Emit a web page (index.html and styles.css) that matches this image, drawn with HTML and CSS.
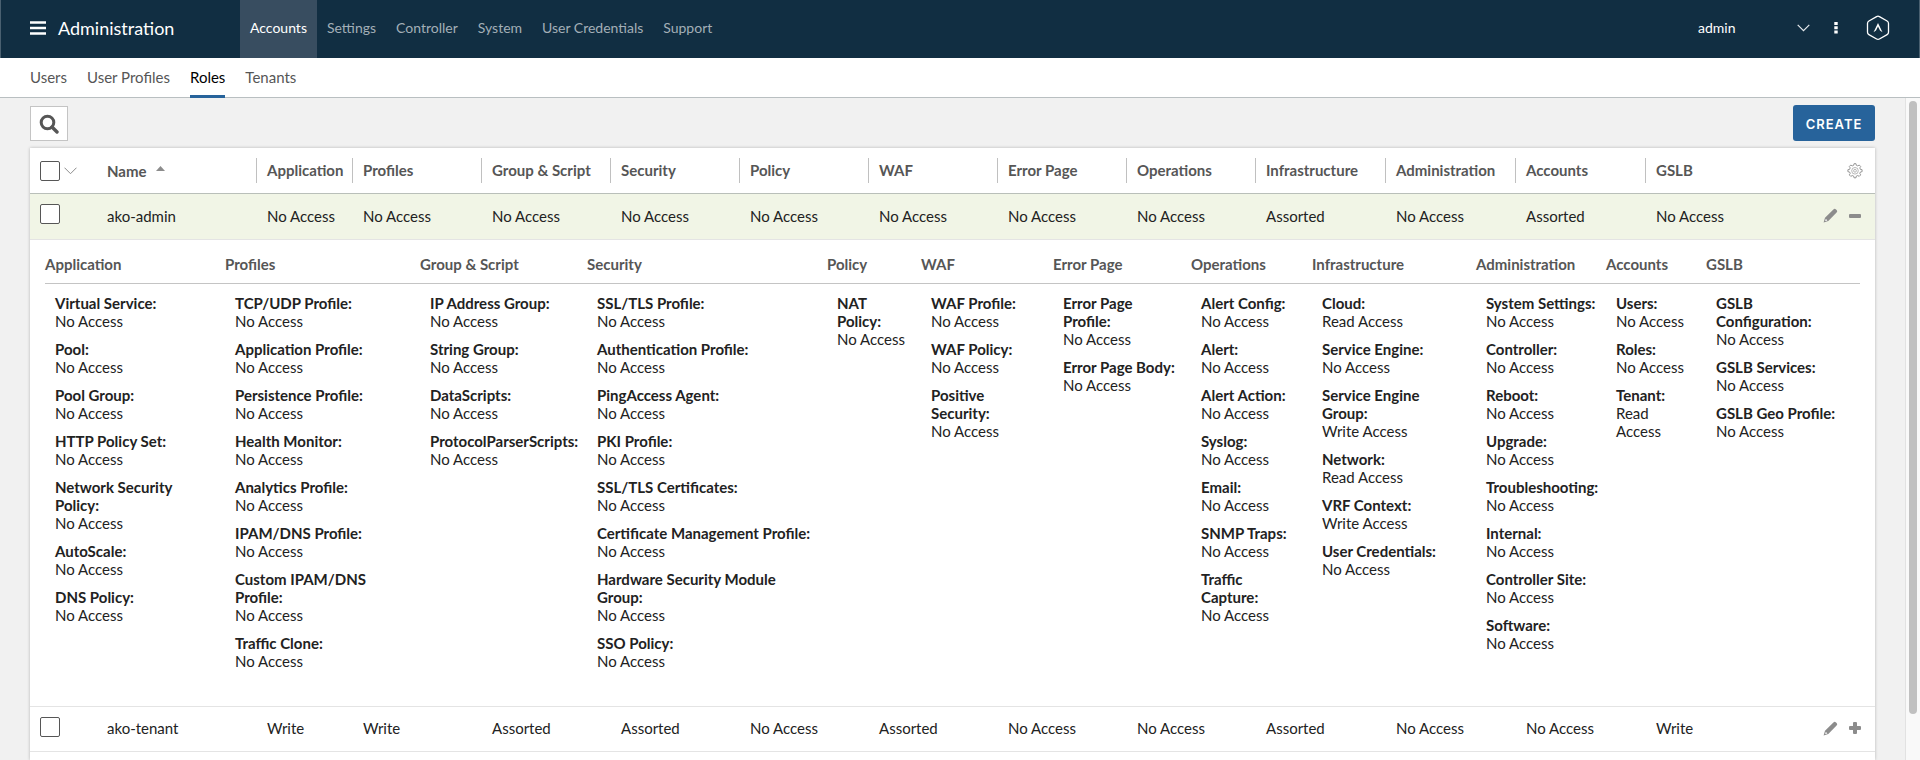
FILE: index.html
```html
<!DOCTYPE html>
<html lang="en">
<head>
<meta charset="utf-8">
<title>Administration - Roles</title>
<link rel="stylesheet" href="styles.css">
</head>
<body>
<header class="topbar">
  <button class="icon-btn menu-btn" aria-label="Menu">
    <svg width="16" height="14" viewBox="0 0 16 14"><path d="M0 1.500h16M0 7h16M0 12.500h16" stroke="#fff" stroke-width="2.600"/></svg>
  </button>
  <h1 class="title">Administration</h1>
  <nav class="main-nav">
    <a href="#" class="active">Accounts</a>
    <a href="#">Settings</a>
    <a href="#">Controller</a>
    <a href="#">System</a>
    <a href="#">User Credentials</a>
    <a href="#">Support</a>
  </nav>
  <div class="user-area">
    <label class="user-select">
      <select aria-label="Tenant"><option>admin</option></select>
      <svg width="13" height="8" viewBox="0 0 13 8"><path d="M.7.9l5.800 5.700L12.300.9" fill="none" stroke="#e6eaed" stroke-width="1.200"/></svg>
    </label>
    <button class="icon-btn" aria-label="More">
      <svg width="4" height="12" viewBox="0 0 4 12"><path d="M.3 0h3.400v3H.3zM.3 4.300h3.400v3H.3zM.3 8.600h3.400v3H.3z" fill="#fff"/></svg>
    </button>
    <button class="icon-btn logo-btn" aria-label="About">
      <svg width="24" height="26" viewBox="0 0 24 26"><path d="M10.600 1.600q1.400-.8 2.800 0l7.700 4.400q1.400.8 1.400 2.400v8.800q0 1.600-1.400 2.400l-7.700 4.400q-1.400.8-2.800 0l-7.700-4.400q-1.400-.8-1.400-2.400V8.400q0-1.600 1.400-2.400z" fill="none" stroke="#fff" stroke-width="1.300"/><path d="M7.500 17.300L12 8l4.500 9.300-2.500-1.800-2-4-2 4z" fill="#fff"/></svg>
    </button>
  </div>
</header>

<nav class="sub-nav">
  <a href="#">Users</a>
  <a href="#">User Profiles</a>
  <a href="#" class="active">Roles</a>
  <a href="#">Tenants</a>
</nav>

<main class="page">
  <section class="content">
    <div class="toolbar">
      <button class="search-btn" aria-label="Search">
        <svg width="20" height="20" viewBox="0 0 20 20"><circle cx="8.500" cy="8.500" r="6.300" fill="none" stroke="#565656" stroke-width="3"/><path d="M13 13l5 5" stroke="#565656" stroke-width="3.400" stroke-linecap="round"/></svg>
      </button>
      <button class="create-btn">CREATE</button>
    </div>

    <div class="card">
      <table class="grid">
        <colgroup>
          <col class="c-check"><col class="c-name"><col class="c-app">
          <col class="c-mid"><col class="c-mid"><col class="c-mid"><col class="c-mid"><col class="c-mid"><col class="c-mid"><col class="c-mid">
          <col class="c-wide"><col class="c-wide"><col class="c-wide"><col class="c-gslb"><col class="c-actions">
        </colgroup>
        <thead>
          <tr>
            <td class="check"><div class="check-all"><input type="checkbox" aria-label="Select all"><svg width="13" height="8" viewBox="0 0 13 8"><path d="M.5.7l6 6 6-6" fill="none" stroke="#8c8c8c"/></svg></div></td>
            <th class="name">Name <svg class="sort" width="9" height="5" viewBox="0 0 9 5"><path d="M4.500 0L9 5H0z" fill="#8c8c8c"/></svg></th>
            <th><span>Application</span></th>
            <th><span>Profiles</span></th>
            <th><span>Group &amp; Script</span></th>
            <th><span>Security</span></th>
            <th><span>Policy</span></th>
            <th><span>WAF</span></th>
            <th><span>Error Page</span></th>
            <th><span>Operations</span></th>
            <th><span>Infrastructure</span></th>
            <th><span>Administration</span></th>
            <th><span>Accounts</span></th>
            <th><span>GSLB</span></th>
            <td class="actions"><div>
              <button class="icon-btn" aria-label="Columns">
                <svg width="16" height="16" viewBox="0 0 16 16" fill="none" stroke="#8c8c8c"><path d="M6.700 2.300L7 .7h2l.3 1.600 1.500.6 1.400-.9 1.500 1.500-.9 1.400.6 1.500 1.700.3v2l-1.700.3-.6 1.500.9 1.400-1.500 1.500-1.400-.9-1.500.6-.3 1.700H7l-.3-1.700-1.500-.6-1.400.9-1.500-1.500.9-1.400-.6-1.500-1.700-.3v-2l1.700-.3.6-1.500-.9-1.400 1.500-1.500 1.400.9z" stroke-width=".9"/><circle cx="8" cy="7.800" r="3.300" stroke-width=".6"/><circle cx="8" cy="7.800" r="1.400" stroke-width=".6"/></svg>
              </button>
            </div></td>
          </tr>
        </thead>
        <tbody>
          <tr class="selected">
            <td class="check"><input type="checkbox" aria-label="Select ako-admin"></td>
            <td class="name">ako-admin</td>
            <td>No Access</td><td>No Access</td><td>No Access</td><td>No Access</td><td>No Access</td><td>No Access</td><td>No Access</td><td>No Access</td><td>Assorted</td><td>No Access</td><td>Assorted</td><td>No Access</td>
            <td class="actions"><div>
              <button class="icon-btn" aria-label="Edit"><svg width="15" height="15" viewBox="0 0 15 15"><path d="M10.400 1.400q1.300-1.300 2.600 0l.6.6q1.300 1.300 0 2.600L5.300 12.900.6 14.400 2 9.800z" fill="#8c8c8c"/><path d="M2.800 10.800l1.600 1.600-1.900.7-.3-.4z" fill="#fff"/></svg></button>
              <button class="icon-btn" aria-label="Collapse"><svg width="12" height="12" viewBox="0 0 12 12"><rect y="4" width="12" height="4" rx="1" fill="#8c8c8c"/></svg></button>
            </div></td>
          </tr>
          <tr class="detail-row">
            <td colspan="15">
              <table class="detail">
                <colgroup>
                  <col class="d-180"><col class="d-195"><col class="d-167"><col class="d-240"><col class="d-94"><col class="d-132"><col class="d-138"><col class="d-121"><col class="d-164"><col class="d-130"><col class="d-100"><col class="d-154">
                </colgroup>
                <thead>
                  <tr><th>Application</th><th>Profiles</th><th>Group &amp; Script</th><th>Security</th><th>Policy</th><th>WAF</th><th>Error Page</th><th>Operations</th><th>Infrastructure</th><th>Administration</th><th>Accounts</th><th>GSLB</th></tr>
                </thead>
                <tbody>
                  <tr>
                    <td><dl>
                      <dt>Virtual Service:</dt><dd>No Access</dd>
                      <dt>Pool:</dt><dd>No Access</dd>
                      <dt>Pool Group:</dt><dd>No Access</dd>
                      <dt>HTTP Policy Set:</dt><dd>No Access</dd>
                      <dt>Network Security<br>Policy:</dt><dd>No Access</dd>
                      <dt>AutoScale:</dt><dd>No Access</dd>
                      <dt>DNS Policy:</dt><dd>No Access</dd>
                    </dl></td>
                    <td><dl>
                      <dt>TCP/UDP Profile:</dt><dd>No Access</dd>
                      <dt>Application Profile:</dt><dd>No Access</dd>
                      <dt>Persistence Profile:</dt><dd>No Access</dd>
                      <dt>Health Monitor:</dt><dd>No Access</dd>
                      <dt>Analytics Profile:</dt><dd>No Access</dd>
                      <dt>IPAM/DNS Profile:</dt><dd>No Access</dd>
                      <dt>Custom IPAM/DNS<br>Profile:</dt><dd>No Access</dd>
                      <dt>Traffic Clone:</dt><dd>No Access</dd>
                    </dl></td>
                    <td><dl>
                      <dt>IP Address Group:</dt><dd>No Access</dd>
                      <dt>String Group:</dt><dd>No Access</dd>
                      <dt>DataScripts:</dt><dd>No Access</dd>
                      <dt>ProtocolParserScripts:</dt><dd>No Access</dd>
                    </dl></td>
                    <td><dl>
                      <dt>SSL/TLS Profile:</dt><dd>No Access</dd>
                      <dt>Authentication Profile:</dt><dd>No Access</dd>
                      <dt>PingAccess Agent:</dt><dd>No Access</dd>
                      <dt>PKI Profile:</dt><dd>No Access</dd>
                      <dt>SSL/TLS Certificates:</dt><dd>No Access</dd>
                      <dt>Certificate Management Profile:</dt><dd>No Access</dd>
                      <dt>Hardware Security Module<br>Group:</dt><dd>No Access</dd>
                      <dt>SSO Policy:</dt><dd>No Access</dd>
                    </dl></td>
                    <td><dl>
                      <dt>NAT<br>Policy:</dt><dd>No Access</dd>
                    </dl></td>
                    <td><dl>
                      <dt>WAF Profile:</dt><dd>No Access</dd>
                      <dt>WAF Policy:</dt><dd>No Access</dd>
                      <dt>Positive<br>Security:</dt><dd>No Access</dd>
                    </dl></td>
                    <td><dl>
                      <dt>Error Page<br>Profile:</dt><dd>No Access</dd>
                      <dt>Error Page Body:</dt><dd>No Access</dd>
                    </dl></td>
                    <td><dl>
                      <dt>Alert Config:</dt><dd>No Access</dd>
                      <dt>Alert:</dt><dd>No Access</dd>
                      <dt>Alert Action:</dt><dd>No Access</dd>
                      <dt>Syslog:</dt><dd>No Access</dd>
                      <dt>Email:</dt><dd>No Access</dd>
                      <dt>SNMP Traps:</dt><dd>No Access</dd>
                      <dt>Traffic<br>Capture:</dt><dd>No Access</dd>
                    </dl></td>
                    <td><dl>
                      <dt>Cloud:</dt><dd>Read Access</dd>
                      <dt>Service Engine:</dt><dd>No Access</dd>
                      <dt>Service Engine<br>Group:</dt><dd>Write Access</dd>
                      <dt>Network:</dt><dd>Read Access</dd>
                      <dt>VRF Context:</dt><dd>Write Access</dd>
                      <dt>User Credentials:</dt><dd>No Access</dd>
                    </dl></td>
                    <td><dl>
                      <dt>System Settings:</dt><dd>No Access</dd>
                      <dt>Controller:</dt><dd>No Access</dd>
                      <dt>Reboot:</dt><dd>No Access</dd>
                      <dt>Upgrade:</dt><dd>No Access</dd>
                      <dt>Troubleshooting:</dt><dd>No Access</dd>
                      <dt>Internal:</dt><dd>No Access</dd>
                      <dt>Controller Site:</dt><dd>No Access</dd>
                      <dt>Software:</dt><dd>No Access</dd>
                    </dl></td>
                    <td><dl>
                      <dt>Users:</dt><dd>No Access</dd>
                      <dt>Roles:</dt><dd>No Access</dd>
                      <dt>Tenant:</dt><dd>Read<br>Access</dd>
                    </dl></td>
                    <td><dl>
                      <dt>GSLB<br>Configuration:</dt><dd>No Access</dd>
                      <dt>GSLB Services:</dt><dd>No Access</dd>
                      <dt>GSLB Geo Profile:</dt><dd>No Access</dd>
                    </dl></td>
                  </tr>
                </tbody>
              </table>
            </td>
          </tr>
          <tr>
            <td class="check"><input type="checkbox" aria-label="Select ako-tenant"></td>
            <td class="name">ako-tenant</td>
            <td>Write</td><td>Write</td><td>Assorted</td><td>Assorted</td><td>No Access</td><td>Assorted</td><td>No Access</td><td>No Access</td><td>Assorted</td><td>No Access</td><td>No Access</td><td>Write</td>
            <td class="actions"><div>
              <button class="icon-btn" aria-label="Edit"><svg width="15" height="15" viewBox="0 0 15 15"><path d="M10.400 1.400q1.300-1.300 2.600 0l.6.6q1.300 1.300 0 2.600L5.300 12.900.6 14.400 2 9.800z" fill="#8c8c8c"/><path d="M2.800 10.800l1.600 1.600-1.900.7-.3-.4z" fill="#fff"/></svg></button>
              <button class="icon-btn" aria-label="Expand"><svg width="12" height="12" viewBox="0 0 12 12"><path d="M4 1q0-1 1-1h2q1 0 1 1v3h3q1 0 1 1v2q0 1-1 1H8v3q0 1-1 1H5q-1 0-1-1V8H1Q0 8 0 7V5q0-1 1-1h3z" fill="#8c8c8c"/></svg></button>
            </div></td>
          </tr>
        </tbody>
      </table>
    </div>
  </section>
  <div class="scroll-track"><div class="scroll-thumb"></div></div>
</main>
</body>
</html>
```
FILE: styles.css
```css
* { box-sizing: border-box; }

body {
  margin: 0;
  height: 100vh;
  display: flex;
  flex-direction: column;
  overflow: hidden;
  background: #f1f1f1;
  color: #222;
  font: 15px/18px Lato, "Open Sans", sans-serif;
}

a { color: inherit; text-decoration: none; }
svg { display: block; flex: none; }

.icon-btn {
  display: flex;
  padding: 0;
  border: 0;
  background: none;
}

/* Top bar */
.topbar {
  flex: none;
  display: flex;
  align-items: center;
  height: 58px;
  padding: 0 29px 2px;
  border-left: 1px solid #4a6070;
  border-right: 1px solid #4a6070;
  background: #112e42;
  color: #fff;
}
.title {
  width: 182px;
  margin: 0 0 0 12px;
  font-size: 18px;
  font-weight: 400;
  line-height: 22px;
}
.main-nav {
  display: flex;
  align-self: stretch;
  margin-bottom: -2px;
  font-size: 14px;
}
.main-nav a {
  display: flex;
  align-items: center;
  padding: 0 10px 2px;
  color: #a3afb7;
}
.main-nav a.active { background: #384d60; color: #fff; }

.user-area {
  display: flex;
  align-items: center;
  margin-left: auto;
}
.user-area .icon-btn { margin-left: 24px; }
.user-area .logo-btn { margin-left: 28px; }
.user-select {
  display: flex;
  align-items: center;
  justify-content: space-between;
  width: 112px;
  font-size: 14px;
}
.user-select select {
  appearance: none;
  width: 96px;
  padding: 0;
  border: 0;
  background: none;
  color: #fff;
  font: inherit;
}

/* Second-level navigation */
.sub-nav {
  flex: none;
  display: flex;
  gap: 20px;
  height: 40px;
  padding: 0 30px;
  border-bottom: 1px solid #b9bfc1;
  background: #fff;
  color: #565656;
}
.sub-nav a {
  height: 40px;
  padding-top: 10px;
}
.sub-nav a.active {
  border-bottom: 3px solid #27639b;
  color: #000;
}

/* Page body */
.page {
  flex: 1;
  display: flex;
  min-height: 0;
}
.content {
  flex: 1;
  display: flex;
  flex-direction: column;
  min-width: 0;
  padding: 7px 30px 0;
}
.toolbar {
  display: flex;
  justify-content: space-between;
  margin-bottom: 7px;
}
.search-btn {
  display: flex;
  align-items: center;
  justify-content: center;
  width: 38px;
  height: 35px;
  margin-top: 1px;
  padding: 0;
  border: 1px solid #c4c4c4;
  background: #fff;
}
.create-btn {
  width: 82px;
  height: 36px;
  padding: 2px 0 0;
  border: 0;
  border-radius: 3px;
  background: #27639b;
  color: #fff;
  font: 600 13px/18px Inter, sans-serif;
  letter-spacing: 1px;
}
.scroll-track {
  width: 15px;
  padding: 3px 3px 0;
  border-left: 1px solid #e2e2e2;
  background: #f9f9f9;
}
.scroll-thumb {
  width: 8px;
  height: 93%;
  border-radius: 4px;
  background: #c0c0c0;
}

/* Roles grid */
.card {
  flex: 1;
  background: #fff;
  box-shadow: 0 0 3px rgba(0, 0, 0, .25);
}
table {
  width: 100%;
  border-collapse: separate;
  border-spacing: 0;
  table-layout: fixed;
}
th { font-weight: 700; text-align: left; color: #565656; }
th, td { padding: 0; white-space: nowrap; }

.c-check { width: 67px; }
.c-name { width: 159px; }
.c-app { width: 96px; }
.c-mid { width: 129px; }
.c-wide { width: 130px; }
.c-gslb { width: 130px; }
.c-actions { width: 100px; }

.grid > thead > tr > * {
  height: 46px;
  border-bottom: 1px solid #b9bfb9;
}
.grid > thead span {
  display: block;
  padding: 3px 0 4px 10px;
  border-left: 1px solid #c0c0c0;
}
.grid > tbody > tr > td {
  height: 45px;
  padding: 0 0 2px 11px;
  border-bottom: 1px solid #e4e4e4;
}
.grid > tbody > tr.selected > td {
  height: 46px;
  background: #f1f5e6;
}
.grid > thead .name,
.grid > tbody > tr > .name { padding-left: 10px; }
.sort { display: inline-block; margin-left: 6px; vertical-align: 6px; }

.grid > thead .check { padding-left: 10px; }
.grid > tbody > tr > .check {
  padding: 10px 0 0 10px;
  vertical-align: top;
}
.check-all { display: flex; align-items: center; gap: 4px; }
input[type="checkbox"] {
  appearance: none;
  display: block;
  width: 20px;
  height: 20px;
  margin: 0;
  border: 1px solid #565656;
  border-radius: 2px;
  background: #fff;
}

.actions > div {
  display: flex;
  align-items: center;
  justify-content: flex-end;
  gap: 11px;
  padding-right: 14px;
}
.grid > thead .actions > div { padding-right: 12px; }

/* Expanded role */
.grid > tbody > .detail-row > td { padding: 6px 15px 26px; }
.detail th {
  height: 38px;
  padding-bottom: 2px;
  border-bottom: 1px solid #c4c4c4;
}
.detail td {
  padding: 10px 0 0 10px;
  vertical-align: top;
}
.d-180 { width: 180px; }
.d-195 { width: 195px; }
.d-167 { width: 167px; }
.d-240 { width: 240px; }
.d-94 { width: 94px; }
.d-132 { width: 132px; }
.d-138 { width: 138px; }
.d-121 { width: 121px; }
.d-164 { width: 164px; }
.d-130 { width: 130px; }
.d-100 { width: 100px; }
.d-154 { width: 154px; }

dl { margin: 0; }
dt { font-weight: 700; }
dd { margin: 0 0 10px; }
```
